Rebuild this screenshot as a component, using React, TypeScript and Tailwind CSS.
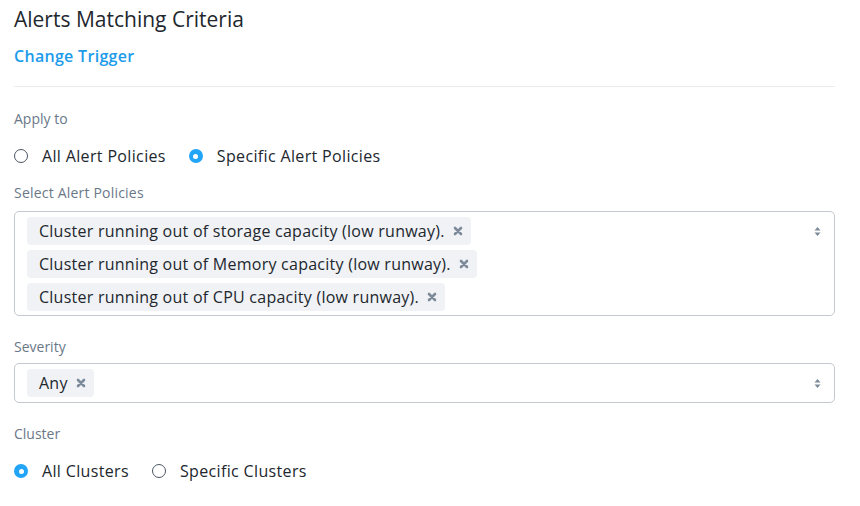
import React from "react";

const font = { fontFamily: "'Open Sans', Lato, sans-serif" };

function Radio({ checked, label }: { checked: boolean; label: string }) {
  return (
    <label className="flex items-center gap-[14px] h-[20px]">
      {checked ? (
        <span className="w-[14px] h-[14px] rounded-full bg-[#22a5f7] flex items-center justify-center">
          <span className="w-[5px] h-[5px] rounded-full bg-white" />
        </span>
      ) : (
        <span className="w-[14px] h-[14px] rounded-full border border-[#4b5563] bg-white" />
      )}
      <span className="text-[16px] tracking-[0.35px] leading-[20px] text-[#22272e]">{label}</span>
    </label>
  );
}

function XIcon() {
  return (
    <svg width="10" height="10" viewBox="0 0 10 10" className="shrink-0">
      <path d="M2 2L8 8M8 2L2 8" stroke="#7d8a9a" strokeWidth="2.6" strokeLinecap="round" />
    </svg>
  );
}

function Chip({ text }: { text: string }) {
  return (
    <span className="inline-flex items-center gap-[8px] h-[28px] pl-[12px] pr-[8px] bg-[#f0f2f5] rounded-[4px] text-[16px] leading-[26px] tracking-[0.25px] text-[#22272e] w-fit">
      {text}
      <XIcon />
    </span>
  );
}

function Caret() {
  return (
    <svg width="7" height="11" viewBox="0 0 7 11" className="shrink-0">
      <path d="M3.5 1L6.5 4.5H0.5Z" fill="#7d8a9a" />
      <path d="M3.5 10L6.5 6.5H0.5Z" fill="#7d8a9a" />
    </svg>
  );
}

export default function App() {
  return (
    <div className="w-[860px] h-[506px] bg-white px-[14px] pt-[5px]" style={font}>
      <h1 className="text-[21px] text-[#22272e] leading-[28px]">Alerts Matching Criteria</h1>
      <div className="mt-[13px] text-[16px] tracking-[0.3px] font-semibold text-[#1b9bea] leading-[20px]">Change Trigger</div>
      <div className="mt-[20px] mr-[11px] border-t border-[#ececec]" />
      <div className="mt-[23px] text-[14px] text-[#6a7889] leading-[18px]">Apply to</div>
      <div className="mt-[18px] flex items-center gap-[23px]">
        <Radio checked={false} label="All Alert Policies" />
        <Radio checked={true} label="Specific Alert Policies" />
      </div>
      <div className="mt-[18px] text-[14px] tracking-[0.2px] text-[#6a7889] leading-[18px]">Select Alert Policies</div>
      <div className="mt-[9px] mr-[11px] border border-[#c4c9d1] rounded-[5px] flex items-start pl-[12px] pr-[13px] pt-[5px] pb-[4px]">
        <div className="flex-1 flex flex-col gap-[5px]">
          <Chip text="Cluster running out of storage capacity (low runway)." />
          <Chip text="Cluster running out of Memory capacity (low runway)." />
          <Chip text="Cluster running out of CPU capacity (low runway)." />
        </div>
        <div className="mt-[9px]"><Caret /></div>
      </div>
      <div className="mt-[22px] text-[14px] text-[#6a7889] leading-[18px]">Severity</div>
      <div className="mt-[7px] mr-[11px] h-[40px] border border-[#c4c9d1] rounded-[5px] flex items-center pl-[12px] pr-[13px]">
        <div className="flex-1">
          <Chip text="Any" />
        </div>
        <Caret />
      </div>
      <div className="mt-[22px] text-[14px] text-[#6a7889] leading-[18px]">Cluster</div>
      <div className="mt-[18px] flex items-center gap-[23px]">
        <Radio checked={true} label="All Clusters" />
        <Radio checked={false} label="Specific Clusters" />
      </div>
    </div>
  );
}
